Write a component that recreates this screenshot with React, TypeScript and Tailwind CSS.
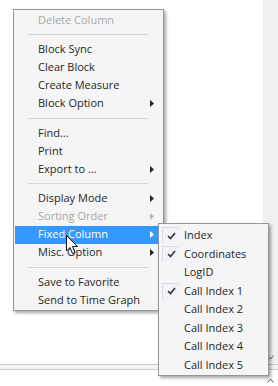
import React from 'react';

type Item = { label?: string; sep?: boolean; disabled?: boolean; sub?: boolean; active?: boolean };

const mainItems: Item[] = [
  { label: 'Delete Column', disabled: true },
  { sep: true },
  { label: 'Block Sync' },
  { label: 'Clear Block' },
  { label: 'Create Measure' },
  { label: 'Block Option', sub: true },
  { sep: true },
  { label: 'Find...' },
  { label: 'Print' },
  { label: 'Export to ...', sub: true },
  { sep: true },
  { label: 'Display Mode', sub: true },
  { label: 'Sorting Order', sub: true, disabled: true },
  { label: 'Fixed Column', sub: true, active: true },
  { label: 'Misc. Option', sub: true },
  { sep: true },
  { label: 'Save to Favorite' },
  { label: 'Send to Time Graph' },
];

const subItems = [
  { label: 'Index', checked: true },
  { label: 'Coordinates', checked: true },
  { label: 'LogID', checked: false },
  { label: 'Call Index 1', checked: true },
  { label: 'Call Index 2', checked: false },
  { label: 'Call Index 3', checked: false },
  { label: 'Call Index 4', checked: false },
  { label: 'Call Index 5', checked: false },
];

function SubArrow({ color }: { color: string }) {
  return (
    <svg width="4" height="7" viewBox="0 0 4 7">
      <path d="M0 0 L4 3.5 L0 7 Z" fill={color} />
    </svg>
  );
}

function Check() {
  return (
    <svg width="9" height="8" viewBox="0 0 9 8">
      <path d="M1 4 L3.5 6.5 L8 1" stroke="#333" strokeWidth="1.6" fill="none" />
    </svg>
  );
}

function MainMenu() {
  return (
    <div className="absolute left-[13px] top-[9px] w-[151px] border border-[#979797] bg-[#f5f5f5] p-[1px] shadow-[2px_2px_3px_rgba(0,0,0,0.35)]">
      {mainItems.map((it, i) =>
        it.sep ? (
          <div key={i} className="flex h-[11.5px] items-center pl-[13px] pr-[14px]">
            <div className="h-px w-full bg-[#d7d7d7]" />
          </div>
        ) : (
          <div
            key={i}
            className={
              'flex h-[18px] items-center pl-[23px] pr-[8px] ' +
              (it.active ? 'bg-[#3399ff] text-white' : it.disabled ? 'text-[#a8a8a8]' : 'text-[#262626]')
            }
          >
            <span className="flex-1 whitespace-nowrap">{it.label}</span>
            {it.sub && <SubArrow color={it.active ? '#ffffff' : it.disabled ? '#b8b8b8' : '#222'} />}
          </div>
        )
      )}
    </div>
  );
}

function SubMenu() {
  return (
    <div className="absolute left-[158px] top-[223px] w-[111px] border border-[#979797] bg-[#f5f5f5] pt-[2px] pb-[1px] pl-[3px] shadow-[2px_2px_3px_rgba(0,0,0,0.35)]">
      {subItems.map((it) => (
        <div key={it.label} className="flex h-[18.5px] items-center text-[#262626]">
          <div className="flex w-[22px] items-center">
            {it.checked ? (
              <div className="flex h-[16px] w-[17px] items-center justify-center border-l border-t border-[#d8dde3] bg-[#f1f3f6]">
                <Check />
              </div>
            ) : null}
          </div>
          <span className="whitespace-nowrap">{it.label}</span>
        </div>
      ))}
    </div>
  );
}

function Cursor() {
  return (
    <svg className="absolute left-[66px] top-[235px]" width="13" height="20" viewBox="0 0 13 20">
      <path
        d="M0.5 0.5 L0.5 16 L4 12.5 L6.5 18.5 L9 17.5 L6.5 11.5 L11.5 11.5 Z"
        fill="#fff"
        stroke="#111"
        strokeWidth="1"
        strokeLinejoin="round"
      />
    </svg>
  );
}

export default function App() {
  return (
    <div
      className="relative flex h-[386px] w-[278px] flex-col overflow-hidden bg-white text-[11px]"
      style={{ fontFamily: '"Open Sans", "Noto Sans", sans-serif' }}
    >
      <div className="flex flex-1">
        <div className="flex-1" />
        <div className="flex w-[15px] flex-col justify-end items-center bg-[#f0f0f0] pb-[4px]">
          <svg width="7" height="5" viewBox="0 0 7 5">
            <path d="M0.5 0.5 L3.5 4 L6.5 0.5" stroke="#555" fill="none" />
          </svg>
        </div>
      </div>
      <div className="h-px bg-[#c9c9c9]" />
      <div className="h-[4px] bg-[#f4f4f4]" />
      <div className="h-px bg-[#c9c9c9]" />
      <div className="flex h-[16px] justify-end">
        <div className="flex w-[15px] items-end justify-center pb-[3px]">
          <svg width="7" height="5" viewBox="0 0 7 5">
            <path d="M0.5 4.5 L3.5 1 L6.5 4.5" stroke="#555" fill="none" />
          </svg>
        </div>
      </div>
      <MainMenu />
      <SubMenu />
      <Cursor />
    </div>
  );
}
